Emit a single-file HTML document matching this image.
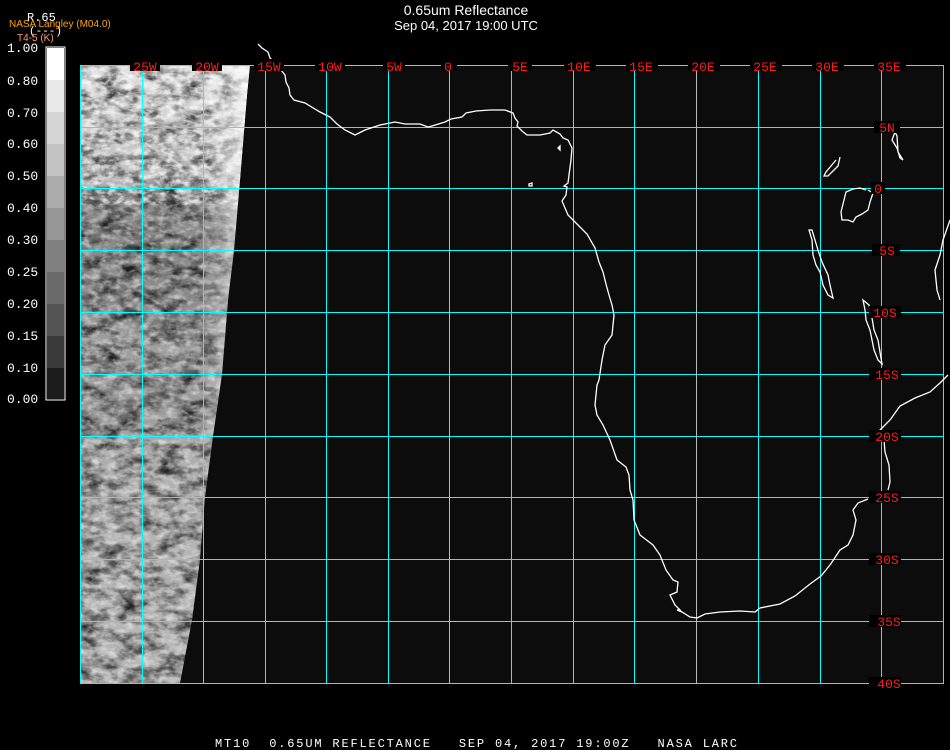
<!DOCTYPE html>
<html><head><meta charset="utf-8"><style>
html,body{margin:0;padding:0;background:#000;width:950px;height:750px;overflow:hidden}
svg{display:block}
text{font-family:"Liberation Sans",sans-serif}
.m{font-family:"Liberation Mono",monospace}
</style></head><body>
<svg width="950" height="750" viewBox="0 0 950 750" xmlns="http://www.w3.org/2000/svg">
<defs>
<filter id="tex" x="0" y="0" width="100%" height="100%">
<feTurbulence type="fractalNoise" baseFrequency="0.05 0.09" numOctaves="4" seed="7" result="n"/>
<feColorMatrix in="n" type="matrix" values="0 0 0 0 0  0 0 0 0 0  0 0 0 0 0  2.2 0 0 0 -0.85" result="a"/>
<feFlood flood-color="#000"/>
<feComposite in2="a" operator="in"/>
</filter>
<filter id="tex2" x="0" y="0" width="100%" height="100%">
<feTurbulence type="fractalNoise" baseFrequency="0.12 0.2" numOctaves="3" seed="3" result="n"/>
<feColorMatrix in="n" type="matrix" values="0 0 0 0 1  0 0 0 0 1  0 0 0 0 1  2.4 0 0 0 -1.0" />
</filter>
<linearGradient id="g1" x1="0" y1="0" x2="0" y2="1">
<stop offset="0" stop-color="#e0e0e0"/>
<stop offset="0.18" stop-color="#c0c0c0"/>
<stop offset="0.22" stop-color="#8c8c8c"/>
<stop offset="0.38" stop-color="#8a8a8a"/>
<stop offset="0.45" stop-color="#a0a0a0"/>
<stop offset="0.55" stop-color="#9a9a9a"/>
<stop offset="0.65" stop-color="#b0b0b0"/>
<stop offset="0.8" stop-color="#b4b4b4"/>
<stop offset="1" stop-color="#b8b8b8"/>
</linearGradient>
<linearGradient id="edge" x1="0" y1="0" x2="1" y2="0">
<stop offset="0.7" stop-color="#fff" stop-opacity="0"/>
<stop offset="1" stop-color="#fff" stop-opacity="0.85"/>
</linearGradient>
<clipPath id="strip"><polygon points="80,65 250,65 247,95 240,180 234,250 228,300 222,374 213,436 205,497 200,559 192,620 180,683 80,683"/></clipPath>
</defs>

<rect x="80" y="65" width="864" height="618" fill="#0c0c0c"/>

<g clip-path="url(#strip)">
<rect x="80" y="65" width="175" height="618" fill="url(#g1)"/>
<rect x="80" y="65" width="175" height="618" filter="url(#tex)" opacity="0.8"/>
<rect x="80" y="65" width="175" height="618" filter="url(#tex2)" opacity="0.5"/>
<rect x="80" y="65" width="175" height="140" filter="url(#tex2)" opacity="0.6"/>
<rect x="80" y="65" width="175" height="618" fill="url(#edge)"/>
</g>

<g fill="#00ffff">
<rect x="80" y="65" width="1" height="619"/>
<rect x="142" y="65" width="1" height="619"/>
<rect x="203" y="65" width="1" height="619"/>
<rect x="265" y="65" width="1" height="619"/>
<rect x="326" y="65" width="1" height="619"/>
<rect x="388" y="65" width="1" height="619"/>
<rect x="511" y="65" width="1" height="619"/>
<rect x="573" y="65" width="1" height="619"/>
<rect x="634" y="65" width="1" height="619"/>
<rect x="758" y="65" width="1" height="619"/>
<rect x="820" y="65" width="1" height="619"/>
<rect x="881" y="65" width="1" height="619"/>
<rect x="943" y="65" width="1" height="619"/>
<rect x="80" y="65" width="864" height="1"/>
<rect x="80" y="127" width="864" height="1"/>
<rect x="80" y="188" width="864" height="1"/>
<rect x="80" y="250" width="864" height="1"/>
<rect x="80" y="312" width="864" height="1"/>
<rect x="80" y="374" width="864" height="1"/>
<rect x="80" y="436" width="864" height="1"/>
<rect x="80" y="497" width="864" height="1"/>
<rect x="80" y="559" width="864" height="1"/>
<rect x="80" y="621" width="864" height="1"/>
<rect x="80" y="683" width="864" height="1"/>
</g>
<g fill="#bbbbbb">
<rect x="449" y="66" width="1" height="617"/>
<rect x="696" y="66" width="1" height="617"/>
</g>

<g stroke="#fff" stroke-width="1.3" fill="none">
<path d="M258,44L262,48L268,52L270,58L277,65L285,75L286,82L289,88L290,95L294,100L305,103L320,112L330,117L337,124L345,130L355,135L365,130L380,125L395,122L405,124L420,124L428,127L432,126L445,122L451,119L462,117L466,113L476,111L490,110L505,110L513,113L515,118L518,122L517,126L522,131L527,135L540,135L550,133L553,130L560,134L563,138L568,140L572,148L571,160L569,175L568,183L564,186L567,187L566,195L562,201L568,215L577,224L587,234L595,248L599,262L603,272L606,284L609,295L612,305L614,315L612,335L605,345L602,360L599,380L597,385L595,405L597,415L603,425L610,440L617,460L626,467L629,475L630,490L633,500L634,520L640,535L653,545L660,555L666,570L673,580L678,582L677,592L670,595L675,605L680,610L677,610L682,612L690,617L697,618L705,614L720,612L740,611L755,612L760,608L780,604L795,596L810,584L821,576L830,565L840,550L848,545L853,535L856,520L853,510L858,503L868,499"/>
<path d="M888,490L890,482L889,465L885,452L884,440L878,437L880,430L890,420L900,406L915,398L930,392L940,383L948,375"/>
<path d="M940,300L937,290L935,270L940,255L943,240L950,220"/>
<path d="M529,184L532,183L532,186L529,186Z"/>
<path d="M558,148L560,146L560,150Z"/>
<path d="M836,160L826,172L824,176L828,176L838,166L840,157"/>
<path d="M895,132L892,140L897,148L900,158L903,160L898,152L897,136Z"/>
<path d="M866,190L860,188L853,189L846,192L844,200L841,212L842,220L848,220L853,222L856,217L862,214L868,210L870,202L873,193L868,190"/>
<path d="M809,230L812,240L813,255L816,265L820,272L823,285L828,295L833,298L830,285L828,275L822,262L818,250L815,240L812,230Z"/>
<path d="M863,300L865,310L866,320L870,330L872,340L874,350L878,360L882,364L880,352L878,340L874,330L872,318L869,305Z"/>
</g>

<g font-size="13" fill="#ff1a1a" text-anchor="middle" class="m">
<rect x="130" y="59" width="30" height="12" fill="#000"/><text x="145" y="71" class="m">25W</text>
<rect x="192" y="59" width="30" height="12" fill="#000"/><text x="207" y="71" class="m">20W</text>
<rect x="254" y="59" width="30" height="12" fill="#000"/><text x="269" y="71" class="m">15W</text>
<rect x="315" y="59" width="30" height="12" fill="#000"/><text x="330" y="71" class="m">10W</text>
<rect x="383" y="59" width="22" height="12" fill="#000"/><text x="394" y="71" class="m">5W</text>
<rect x="441" y="59" width="16" height="12" fill="#000"/><text x="448" y="71" class="m">0</text>
<rect x="508" y="59" width="24" height="12" fill="#000"/><text x="520" y="71" class="m">5E</text>
<rect x="564" y="59" width="32" height="12" fill="#000"/><text x="579" y="71" class="m">10E</text>
<rect x="626" y="59" width="32" height="12" fill="#000"/><text x="641" y="71" class="m">15E</text>
<rect x="688" y="59" width="32" height="12" fill="#000"/><text x="703" y="71" class="m">20E</text>
<rect x="750" y="59" width="32" height="12" fill="#000"/><text x="765" y="71" class="m">25E</text>
<rect x="812" y="59" width="32" height="12" fill="#000"/><text x="827" y="71" class="m">30E</text>
<rect x="874" y="59" width="32" height="12" fill="#000"/><text x="889" y="71" class="m">35E</text>
</g>
<g font-size="13" fill="#ff1a1a" text-anchor="middle" class="m">
<rect x="874" y="121" width="26" height="12" fill="#000"/><text x="887" y="132" class="m">5N</text>
<rect x="871" y="182" width="14" height="12" fill="#000"/><text x="878" y="193" class="m">0</text>
<rect x="872" y="244" width="28" height="12" fill="#000"/><text x="887" y="255" class="m">5S</text>
<rect x="869" y="306" width="32" height="12" fill="#000"/><text x="885" y="317" class="m">10S</text>
<rect x="869" y="368" width="32" height="12" fill="#000"/><text x="887" y="379" class="m">15S</text>
<rect x="869" y="430" width="32" height="12" fill="#000"/><text x="887" y="441" class="m">20S</text>
<rect x="869" y="491" width="32" height="12" fill="#000"/><text x="887" y="502" class="m">25S</text>
<rect x="869" y="553" width="32" height="12" fill="#000"/><text x="887" y="564" class="m">30S</text>
<rect x="869" y="615" width="32" height="12" fill="#000"/><text x="889" y="626" class="m">35S</text>
<rect x="869" y="677" width="32" height="12" fill="#000"/><text x="889" y="688" class="m">40S</text>
</g>

<rect x="46" y="47" width="19" height="353" fill="#000" stroke="#fff" stroke-width="1"/>
<rect x="47" y="48" width="17" height="32" fill="#ffffff"/>
<rect x="47" y="80" width="17" height="32" fill="#e8e8e8"/>
<rect x="47" y="112" width="17" height="32" fill="#d6d6d6"/>
<rect x="47" y="144" width="17" height="32" fill="#c4c4c4"/>
<rect x="47" y="176" width="17" height="32" fill="#acacac"/>
<rect x="47" y="208" width="17" height="32" fill="#979797"/>
<rect x="47" y="240" width="17" height="32" fill="#808080"/>
<rect x="47" y="272" width="17" height="32" fill="#6a6a6a"/>
<rect x="47" y="304" width="17" height="32" fill="#545454"/>
<rect x="47" y="336" width="17" height="32" fill="#3a3a3a"/>
<rect x="47" y="368" width="17" height="31" fill="#1c1c1c"/>
<g fill="#fff" font-size="13" class="m">
<text x="7" y="52" class="m">1.00</text>
<text x="7" y="85" class="m">0.80</text>
<text x="7" y="117" class="m">0.70</text>
<text x="7" y="148" class="m">0.60</text>
<text x="7" y="180" class="m">0.50</text>
<text x="7" y="212" class="m">0.40</text>
<text x="7" y="244" class="m">0.30</text>
<text x="7" y="276" class="m">0.25</text>
<text x="7" y="308" class="m">0.20</text>
<text x="7" y="340" class="m">0.15</text>
<text x="7" y="372" class="m">0.10</text>
<text x="7" y="403" class="m">0.00</text>
</g>

<text x="27" y="21" fill="#fff" font-size="12" class="m">R.65</text>
<text x="29" y="34" fill="#fff" font-size="11" class="m">(---)</text>
<text x="9" y="27" fill="#ffa500" font-size="10">NASA Langley (M04.0)</text>
<text x="17" y="41" fill="#ff9a6a" font-size="10">T4-5 (K)</text>

<text x="466" y="15" fill="#fff" font-size="14" text-anchor="middle">0.65um Reflectance</text>
<text x="466" y="30" fill="#fff" font-size="13" text-anchor="middle">Sep 04, 2017 19:00 UTC</text>

<text x="476" y="747" fill="#fff" font-size="12" text-anchor="middle" class="m" xml:space="preserve" textLength="522" lengthAdjust="spacing">MT10  0.65UM REFLECTANCE   SEP 04, 2017 19:00Z   NASA LARC</text>
</svg>
</body></html>
